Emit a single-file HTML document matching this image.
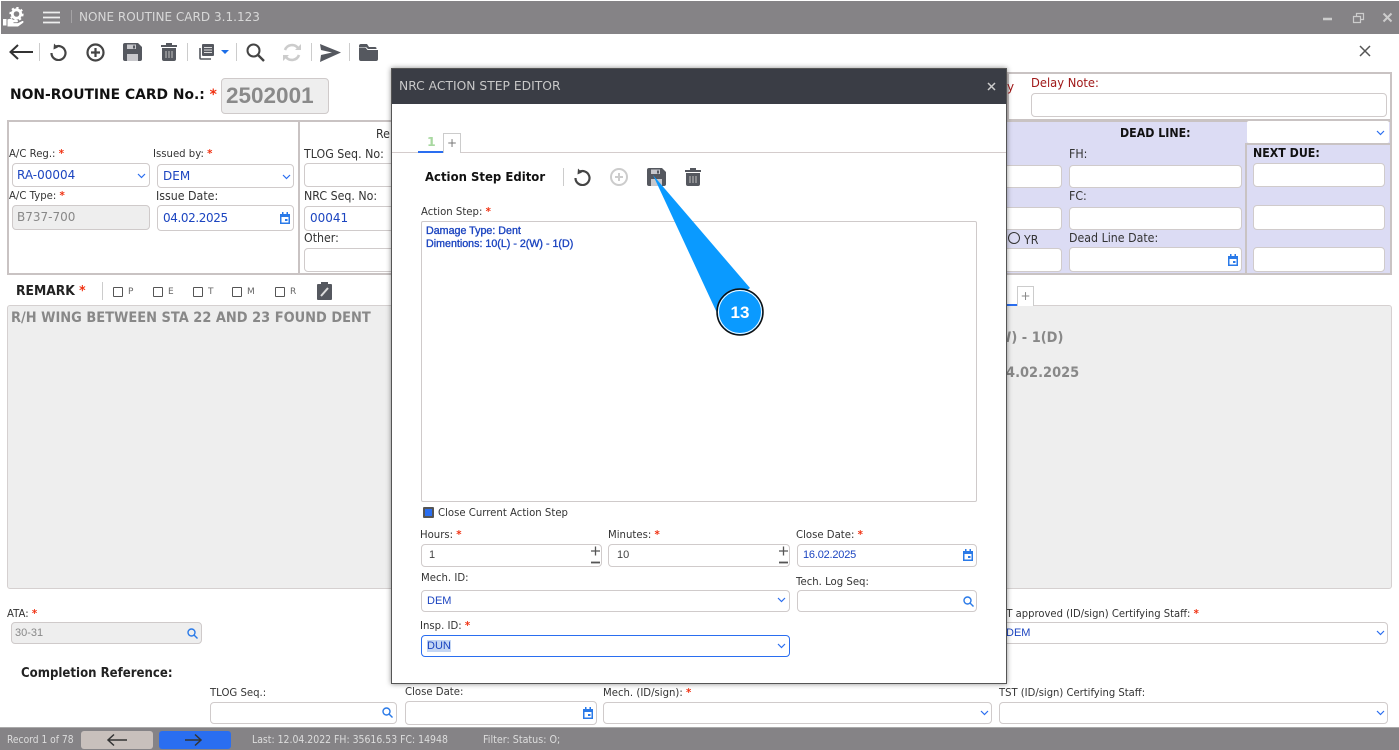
<!DOCTYPE html>
<html><head><meta charset="utf-8"><style>
html,body{margin:0;padding:0;background:#fff;width:1399px;height:750px;overflow:hidden}
body{position:relative;font-family:"DejaVu Sans","Liberation Sans",sans-serif;color:#333}
div,span.a,svg.a{position:absolute;box-sizing:border-box}
.l{font-size:11px;white-space:nowrap;color:#333;line-height:14px;transform-origin:left center;transform:scaleX(.92)}
.l b,b.r{color:#f03010;font-weight:bold}
.i{background:#fff;border:1px solid #d0cbcb;border-radius:4px;font-size:12px;color:#1c45c0;white-space:nowrap;padding-left:5px}
.g{background:#eee;color:#888;border-color:#cfcaca}
.s{font-family:"Liberation Sans",sans-serif}
.bd{background:#c9c3c3}
.chk{width:10px;height:10px;border:1.5px solid #555;border-radius:1px}
.ck{font-size:9px;color:#666}
.bar{background:#858386}
</style></head><body>

<!-- top bar -->
<div class="bar" style="left:1px;top:1px;width:1398px;height:33px"></div>
<svg class="a" style="left:2px;top:7px" width="24" height="20" viewBox="0 0 24 20"><circle cx="14.500" cy="7" r="4.200" fill="none" stroke="#fff" stroke-width="2.800"/><circle cx="14.500" cy="7" r="6.200" fill="none" stroke="#fff" stroke-width="1.800" stroke-dasharray="2.300 2.500"/><path fill="#fff" d="M1 12h3.500v6.500H1zM5.500 12.500c2.500-1.200 4.500-.6 6.500.5h3c1.500.3 1.300 2.300-.3 2.300h-3.200v.8h4.500l4-2c1.400-.5 2 .8 1 1.800l-5 3.600H5.500z"/></svg>
<svg class="a" style="left:43px;top:11px" width="17" height="13"><path d="M0 1.500h17M0 6.500h17M0 11.500h17" stroke="#eee" stroke-width="1.700"/></svg>
<div style="left:71px;top:10px;width:1px;height:13px;background:#a5a3a5"></div>
<div style="left:79px;top:8px;color:#d8d8d8;font-size:12.500px;line-height:18px;white-space:nowrap;transform-origin:left;transform:scaleX(.963)">NONE ROUTINE CARD 3.1.123</div>
<svg class="a" style="left:1322px;top:12px" width="72" height="14" fill="none" stroke="#ccc"><path d="M1 7h9" stroke-width="2.500"/><path d="M31.500 4.500h7v6h-7zM34.500 4.500V1.500h7v6h-3" stroke-width="1.200"/><path d="M61.500 1.500l8 8M69.500 1.500l-8 8" stroke-width="2"/></svg>

<!-- toolbar -->
<svg class="a" style="left:8px;top:43px" width="26" height="18" fill="none" stroke="#333" stroke-width="2"><path d="M25 9H3M10 2L2.500 9l7.500 7"/></svg>
<div style="left:39px;top:43px;width:1px;height:18px;background:#ccc"></div>
<svg class="a" style="left:49px;top:43px" width="18" height="18" fill="none" stroke="#444" stroke-width="2.200"><path d="M6 4a7 7 0 1 1-3.500 6"/><path d="M5 .5L9 4.500 4.500 6.500z" fill="#444" stroke="none"/></svg>
<svg class="a" style="left:86px;top:43px" width="19" height="19" fill="none" stroke="#444" stroke-width="2.200"><circle cx="9.500" cy="9.500" r="8"/><path d="M5 9.500h9M9.500 5v9"/></svg>
<svg class="a" style="left:123px;top:43px" width="19" height="18"><path fill="#55585f" d="M2 0h13l4 4v12a2 2 0 0 1-2 2H2a2 2 0 0 1-2-2V2a2 2 0 0 1 2-2z"/><path fill="#c8c8cc" d="M4 1.500h9v4.500H4zM4 11h11v7H4z"/><path fill="#55585f" d="M10 2.500h2v3h-2z"/></svg>
<svg class="a" style="left:161px;top:43px" width="16" height="18"><path fill="#55585f" d="M5 0h6v2h5v2H0V2h5zM1 5h14v11a2 2 0 0 1-2 2H3a2 2 0 0 1-2-2z"/><path stroke="#aaa" stroke-width="1.300" d="M5 8v7M8 8v7M11 8v7"/></svg>
<div style="left:187px;top:43px;width:1px;height:18px;background:#ccc"></div>
<svg class="a" style="left:199px;top:44px" width="18" height="16"><path fill="none" stroke="#55585f" stroke-width="1.600" d="M1 4v10a1 1 0 0 0 1 1h10"/><path fill="#55585f" d="M4 0h10a1 1 0 0 1 1 1v10a1 1 0 0 1-1 1H4a1 1 0 0 1-1-1V1a1 1 0 0 1 1-1z"/><path stroke="#ddd" d="M5 3.500h8M5 6h8M5 8.500h8"/></svg>
<svg class="a" style="left:221px;top:50px" width="8" height="5"><path fill="#1c6ee8" d="M0 0h8L4 4z"/></svg>
<div style="left:236px;top:43px;width:1px;height:18px;background:#ccc"></div>
<svg class="a" style="left:246px;top:43px" width="19" height="19" fill="none" stroke="#444" stroke-width="2"><circle cx="7.500" cy="7.500" r="6"/><path d="M12 12l6 6" stroke-width="2.400"/></svg>
<svg class="a" style="left:282px;top:43px" width="20" height="19" fill="none" stroke="#ccc" stroke-width="2.600"><path d="M3 7a7.500 7.500 0 0 1 13-2M17 12a7.500 7.500 0 0 1-13 2"/><path fill="#ccc" stroke="none" d="M13 7h6V1zM7 12H1v6z"/></svg>
<div style="left:311px;top:43px;width:1px;height:18px;background:#ccc"></div>
<svg class="a" style="left:320px;top:44px" width="21" height="18"><path fill="#55585f" d="M0 0l21 8.500L0 18l1-7 11-2.500L1 6z"/></svg>
<div style="left:349px;top:43px;width:1px;height:18px;background:#ccc"></div>
<svg class="a" style="left:359px;top:44px" width="19" height="17"><path fill="#55585f" d="M2 0h6l2 3h6a1.500 1.500 0 0 1 1.500 1.500V5H9L7 3H0V2a2 2 0 0 1 2-2zM0 3.500h6.500l2 2.500H19v9a2 2 0 0 1-2 2H2a2 2 0 0 1-2-2z"/></svg>
<svg class="a" style="left:1359px;top:45px" width="12" height="12" stroke="#555" stroke-width="1.500"><path d="M1 1l10 10M11 1L1 11"/></svg>

<!-- heading -->
<div style="left:10px;top:86px;font-size:14px;font-weight:bold;color:#111;line-height:18px;white-space:nowrap;transform-origin:left;transform:scaleX(.99)">NON-ROUTINE CARD No.: <b class="r">*</b></div>
<div class="i g s" style="left:221px;top:78px;width:108px;height:36px;font-size:22.500px;font-weight:bold;line-height:33px;padding-left:4px;color:#8a8a8a">2502001</div>

<!-- left panel -->
<div style="left:7px;top:120px;width:400px;height:155px;border:2px solid #c9c3c3"></div>
<div style="left:298px;top:120px;width:2px;height:155px;background:#c9c3c3"></div>
<div class="l" style="left:9px;top:147px">A/C Reg.: <b>*</b></div>
<div class="l" style="left:153px;top:147px">Issued by: <b>*</b></div>
<div class="i" style="left:12px;top:163px;width:138px;height:24px;line-height:22px;padding-left:4px">RA-00004</div>
<svg class="a" style="left:137px;top:173px" width="9" height="6" fill="none" stroke="#2a6ef0" stroke-width="1.200"><path d="M1 1l3.500 3.500L8 1"/></svg>
<div class="i" style="left:157px;top:164px;width:137px;height:24px;line-height:22px">DEM</div>
<svg class="a" style="left:282px;top:174px" width="9" height="6" fill="none" stroke="#2a6ef0" stroke-width="1.200"><path d="M1 1l3.500 3.500L8 1"/></svg>
<div class="l" style="left:9px;top:189px">A/C Type: <b>*</b></div>
<div class="l" style="left:156px;top:189px;font-size:12px">Issue Date:</div>
<div class="i g" style="left:12px;top:205px;width:138px;height:25px;line-height:23px;padding-left:4px">B737-700</div>
<div class="i" style="left:157px;top:205px;width:137px;height:26px;line-height:24px;letter-spacing:-.4px">04.02.2025</div>
<svg class="a" style="left:280px;top:212px" width="10" height="12"><path fill="#2a7ae8" d="M0 2h10v10H0z"/><path fill="#fff" d="M1.500 5h7v5.500h-7z"/><path fill="#2a7ae8" d="M5 7h2.500v2H5zM2 0h1.500v3H2zM6.500 0H8v3H6.500z"/></svg>
<div class="l" style="left:304px;top:147px;font-size:12px">TLOG Seq. No:</div>
<div class="l" style="left:376px;top:127px;font-size:12px">Re</div>
<div class="i" style="left:304px;top:163px;width:100px;height:24px"></div>
<div class="l" style="left:304px;top:189px;font-size:12px">NRC Seq. No:</div>
<div class="i" style="left:304px;top:206px;width:100px;height:25px;line-height:23px">00041</div>
<div class="l" style="left:304px;top:231px;font-size:12px">Other:</div>
<div class="i" style="left:304px;top:248px;width:100px;height:24px"></div>

<!-- remark row -->
<div style="left:16px;top:283px;font-size:13px;font-weight:bold;color:#222;line-height:18px;white-space:nowrap;transform-origin:left;transform:scaleX(.95)">REMARK <b class="r">*</b></div>
<div style="left:102px;top:282px;width:1px;height:18px;background:#ccc"></div>
<div class="chk" style="left:113px;top:287px"></div><div class="ck" style="left:128px;top:287px">P</div>
<div class="chk" style="left:153px;top:287px"></div><div class="ck" style="left:168px;top:287px">E</div>
<div class="chk" style="left:193px;top:287px"></div><div class="ck" style="left:208px;top:287px">T</div>
<div class="chk" style="left:232px;top:287px"></div><div class="ck" style="left:247px;top:287px">M</div>
<div class="chk" style="left:275px;top:287px"></div><div class="ck" style="left:290px;top:287px">R</div>
<svg class="a" style="left:317px;top:282px" width="15" height="18"><path fill="#55585f" d="M1 2h3V0h7v2h3a1 1 0 0 1 1 1v14a1 1 0 0 1-1 1H1a1 1 0 0 1-1-1V3a1 1 0 0 1 1-1z"/><path stroke="#ddd" stroke-width="2" d="M4 14l7-8"/></svg>

<!-- big gray -->
<div style="left:7px;top:305px;width:1385px;height:284px;background:#eee;border:1px solid #d5d0d0;border-radius:3px"></div>
<div style="left:11px;top:309px;font-size:14px;font-weight:bold;color:#888;line-height:18px;white-space:nowrap;transform-origin:left;transform:scaleX(.928)">R/H WING BETWEEN STA 22 AND 23 FOUND DENT</div>
<div style="left:997px;top:329px;font-size:14px;font-weight:bold;color:#888;line-height:18px;white-space:nowrap;transform-origin:left;transform:scaleX(.928)">W) - 1(D)</div>
<div style="left:997px;top:364px;font-size:14px;font-weight:bold;color:#888;line-height:18px;white-space:nowrap;transform-origin:left;transform:scaleX(.928)">04.02.2025</div>
<div style="left:1007px;top:304px;width:10px;height:2px;background:#2a6ef0"></div>
<div style="left:1017px;top:286px;width:17px;height:20px;border:1px solid #ccc;border-bottom:0;background:#fff;color:#888;font-size:12px;text-align:center;line-height:19px">+</div>

<!-- right panels -->
<div style="left:1007px;top:72px;width:385px;height:49px;border:2px solid #c9c3c3"></div>
<div class="l" style="left:1031px;top:76px;font-size:12px;color:#a01818;transform:scaleX(.96)">Delay Note:</div>
<div style="left:1007px;top:80px;font-size:12px;color:#a01818;line-height:14px">y</div>
<div class="i" style="left:1031px;top:93px;width:356px;height:24px"></div>
<div style="left:1007px;top:120px;width:385px;height:155px;background:#dcdcf4;border:2px solid #c9c3c3;border-left:0"></div>
<div class="bd" style="left:1245px;top:144px;width:2px;height:130px"></div>
<div class="bd" style="left:1245px;top:143px;width:146px;height:2px"></div>
<div style="left:1247px;top:121px;width:142px;height:22px;background:#fff;border-radius:2px"></div>
<svg class="a" style="left:1376px;top:130px" width="9" height="6" fill="none" stroke="#2a6ef0" stroke-width="1.200"><path d="M1 1l3.500 3.500L8 1"/></svg>
<div style="left:1120px;top:126px;font-size:12px;font-weight:bold;color:#111;line-height:15px;white-space:nowrap;transform-origin:left;transform:scaleX(.92)">DEAD LINE:</div>
<div style="left:1253px;top:146px;font-size:12px;font-weight:bold;color:#111;line-height:15px;white-space:nowrap;transform-origin:left;transform:scaleX(.92)">NEXT DUE:</div>
<div class="l" style="left:1069px;top:147px;font-size:12px">FH:</div>
<div class="l" style="left:1069px;top:189px;font-size:12px">FC:</div>
<div class="l" style="left:1069px;top:231px;font-size:12px">Dead Line Date:</div>
<div class="i" style="left:1000px;top:165px;width:62px;height:23px"></div>
<div class="i" style="left:1000px;top:207px;width:62px;height:23px"></div>
<div class="i" style="left:1000px;top:248px;width:62px;height:24px"></div>
<div class="i" style="left:1069px;top:165px;width:173px;height:23px"></div>
<div class="i" style="left:1069px;top:207px;width:173px;height:23px"></div>
<div class="i" style="left:1069px;top:247px;width:173px;height:25px"></div>
<svg class="a" style="left:1228px;top:254px" width="10" height="12"><path fill="#2a7ae8" d="M0 2h10v10H0z"/><path fill="#fff" d="M1.500 5h7v5.500h-7z"/><path fill="#2a7ae8" d="M5 7h2.500v2H5zM2 0h1.500v3H2zM6.500 0H8v3H6.500z"/></svg>
<div class="i" style="left:1253px;top:163px;width:132px;height:24px"></div>
<div class="i" style="left:1253px;top:205px;width:132px;height:25px"></div>
<div class="i" style="left:1253px;top:247px;width:132px;height:25px"></div>
<div style="left:1008px;top:232px;width:12px;height:12px;border:1.200px solid #333;border-radius:50%"></div>
<div class="l" style="left:1024px;top:233px;font-size:12px">YR</div>

<!-- bottom fields -->
<div class="l" style="left:7px;top:607px">ATA: <b>*</b></div>
<div class="i g s" style="left:11px;top:622px;width:191px;height:22px;font-size:11px;line-height:20px;padding-left:3px">30-31</div>
<svg class="a" style="left:187px;top:628px" width="11" height="11" fill="none" stroke="#2a7ae8" stroke-width="1.400"><circle cx="4.500" cy="4.500" r="3.500"/><path d="M7 7l3.500 3.500"/></svg>
<div style="left:21px;top:665px;font-size:13px;font-weight:bold;color:#222;line-height:18px;white-space:nowrap;transform-origin:left;transform:scaleX(.905)">Completion Reference:</div>
<div class="l" style="left:210px;top:686px">TLOG Seq.:</div>
<div class="i" style="left:210px;top:702px;width:187px;height:22px"></div>
<svg class="a" style="left:382px;top:707px" width="11" height="11" fill="none" stroke="#2a7ae8" stroke-width="1.400"><circle cx="4.500" cy="4.500" r="3.500"/><path d="M7 7l3.500 3.500"/></svg>
<div class="l" style="left:405px;top:685px">Close Date:</div>
<div class="i" style="left:405px;top:701px;width:192px;height:24px"></div>
<svg class="a" style="left:583px;top:707px" width="10" height="12"><path fill="#2a7ae8" d="M0 2h10v10H0z"/><path fill="#fff" d="M1.500 5h7v5.500h-7z"/><path fill="#2a7ae8" d="M5 7h2.500v2H5zM2 0h1.500v3H2zM6.500 0H8v3H6.500z"/></svg>
<div class="l" style="left:603px;top:686px">Mech. (ID/sign): <b>*</b></div>
<div class="i" style="left:603px;top:702px;width:389px;height:22px"></div>
<svg class="a" style="left:980px;top:710px" width="9" height="6" fill="none" stroke="#2a6ef0" stroke-width="1.200"><path d="M1 1l3.500 3.500L8 1"/></svg>
<div class="l" style="left:999px;top:686px;transform:scaleX(.91)">TST (ID/sign) Certifying Staff:</div>
<div class="i" style="left:999px;top:702px;width:389px;height:22px"></div>
<svg class="a" style="left:1376px;top:710px" width="9" height="6" fill="none" stroke="#2a6ef0" stroke-width="1.200"><path d="M1 1l3.500 3.500L8 1"/></svg>
<div class="l" style="left:1000px;top:607px;transform:scaleX(.91)">ST approved (ID/sign) Certifying Staff: <b>*</b></div>
<div class="i s" style="left:1000px;top:622px;width:388px;height:22px;font-size:11px;line-height:20px;padding-left:5px">DEM</div>
<svg class="a" style="left:1376px;top:630px" width="9" height="6" fill="none" stroke="#2a6ef0" stroke-width="1.200"><path d="M1 1l3.500 3.500L8 1"/></svg>

<!-- status bar -->
<div class="bar" style="left:0;top:727px;width:1399px;height:23px;border-top:1px solid #aaa"></div>
<div style="left:7px;top:733px;font-size:10.500px;color:#ddd;line-height:14px;white-space:nowrap;transform-origin:left;transform:scaleX(.87)">Record 1 of 78</div>
<div style="left:81px;top:731px;width:72px;height:18px;background:#c8c0bc;border-radius:3px"></div>
<svg class="a" style="left:106px;top:733px" width="22" height="14" fill="none" stroke="#333" stroke-width="1.500"><path d="M21 7H2M8 1.500L2 7l6 5.500"/></svg>
<div style="left:159px;top:731px;width:72px;height:18px;background:#2a6ef0;border-radius:3px"></div>
<svg class="a" style="left:185px;top:733px" width="18" height="14" fill="none" stroke="#333" stroke-width="1.500"><path d="M0 7h16M10 1.500L16 7l-6 5.500"/></svg>
<div style="left:252px;top:733px;font-size:10.500px;color:#ddd;line-height:14px;white-space:nowrap;transform-origin:left;transform:scaleX(.89)">Last: 12.04.2022 FH: 35616.53 FC: 14948</div>
<div style="left:483px;top:733px;font-size:10.500px;color:#ddd;line-height:14px;white-space:nowrap;transform-origin:left;transform:scaleX(.91)">Filter: Status: O;</div>

<!-- modal -->
<div style="left:391px;top:68px;width:616px;height:616px;background:#fff;border:1px solid #555;box-shadow:0 0 5px rgba(0,0,0,.45)"></div>
<div style="left:392px;top:69px;width:614px;height:35px;background:#3a3d45"></div>
<div style="left:399px;top:77px;font-size:12.500px;color:#c8c8c8;line-height:18px;white-space:nowrap;transform-origin:left;transform:scaleX(.985)">NRC ACTION STEP EDITOR</div>
<svg class="a" style="left:987px;top:82px" width="9" height="9" stroke="#ccc" stroke-width="1.500"><path d="M1 1l7 7M8 1L1 8"/></svg>
<div style="left:392px;top:152px;width:614px;height:1px;background:#d4cccc"></div>
<div style="left:427px;top:134px;font-size:12.500px;font-weight:bold;color:#a8d8a0;line-height:15px">1</div>
<div style="left:418px;top:151px;width:25px;height:2px;background:#2a6ef0"></div>
<div style="left:443px;top:133px;width:18px;height:20px;border:1px solid #ccc;border-bottom:0;background:#fff;color:#777;font-size:12px;text-align:center;line-height:19px">+</div>
<div style="left:425px;top:168px;font-size:12.500px;font-weight:bold;color:#111;line-height:17px;white-space:nowrap;transform-origin:left;transform:scaleX(.935)">Action Step Editor</div>
<div style="left:563px;top:168px;width:1px;height:18px;background:#ccc"></div>
<svg class="a" style="left:573px;top:168px" width="18" height="18" fill="none" stroke="#444" stroke-width="2.200"><path d="M6 4a7 7 0 1 1-3.500 6"/><path d="M5 .5L9 4.500 4.500 6.500z" fill="#444" stroke="none"/></svg>
<svg class="a" style="left:610px;top:168px" width="18" height="18" fill="none" stroke="#ccc" stroke-width="2"><circle cx="9" cy="9" r="8"/><path d="M5 9h8M9 5v8"/></svg>
<svg class="a" style="left:647px;top:168px" width="19" height="18"><path fill="#55585f" d="M2 0h13l4 4v12a2 2 0 0 1-2 2H2a2 2 0 0 1-2-2V2a2 2 0 0 1 2-2z"/><path fill="#c8c8cc" d="M4 1.500h9v4.500H4zM4 11h11v7H4z"/><path fill="#55585f" d="M10 2.500h2v3h-2z"/></svg>
<svg class="a" style="left:685px;top:168px" width="16" height="18"><path fill="#55585f" d="M5 0h6v2h5v2H0V2h5zM1 5h14v11a2 2 0 0 1-2 2H3a2 2 0 0 1-2-2z"/><path stroke="#aaa" stroke-width="1.300" d="M5 8v7M8 8v7M11 8v7"/></svg>
<div class="l" style="left:421px;top:205px">Action Step: <b>*</b></div>
<div style="left:421px;top:221px;width:556px;height:281px;border:1px solid #cfcaca;border-radius:2px;background:#fff"></div>
<div class="s" style="left:426px;top:225px;font-size:10.700px;color:#1c45c0;line-height:12.500px;white-space:nowrap;-webkit-text-stroke:.35px #1c45c0">Damage Type: Dent<br>Dimentions: 10(L) - 2(W) - 1(D)</div>
<div style="left:423px;top:507px;width:11px;height:11px;background:#2a6ef0;border:2px solid #555;border-radius:1px"></div>
<div class="l" style="left:438px;top:506px">Close Current Action Step</div>
<div class="l" style="left:420px;top:528px">Hours: <b>*</b></div>
<div class="l" style="left:608px;top:528px">Minutes: <b>*</b></div>
<div class="l" style="left:796px;top:528px">Close Date: <b>*</b></div>
<div class="i s" style="left:421px;top:544px;width:181px;height:23px;font-size:11px;line-height:20px;padding-left:7px;color:#444">1</div>
<div class="i s" style="left:608px;top:544px;width:182px;height:23px;font-size:11px;line-height:20px;padding-left:8px;color:#444">10</div>
<div class="i s" style="left:797px;top:544px;width:180px;height:23px;font-size:11px;line-height:20px;padding-left:5px;letter-spacing:-.2px">16.02.2025</div>
<svg class="a" style="left:590px;top:544px" width="11" height="22" stroke="#555" stroke-width="1.300"><path d="M1 7h9M5.500 2.500v9"/><path d="M1 18.500h9" stroke-width="1.800"/></svg>
<svg class="a" style="left:778px;top:544px" width="11" height="22" stroke="#555" stroke-width="1.300"><path d="M1 7h9M5.500 2.500v9"/><path d="M1 18.500h9" stroke-width="1.800"/></svg>
<svg class="a" style="left:963px;top:549px" width="10" height="12"><path fill="#2a7ae8" d="M0 2h10v10H0z"/><path fill="#fff" d="M1.500 5h7v5.500h-7z"/><path fill="#2a7ae8" d="M5 7h2.500v2H5zM2 0h1.500v3H2zM6.500 0H8v3H6.500z"/></svg>
<div class="l" style="left:421px;top:571px">Mech. ID:</div>
<div class="l" style="left:796px;top:575px">Tech. Log Seq:</div>
<div class="i s" style="left:421px;top:590px;width:369px;height:22px;font-size:11px;line-height:20px;padding-left:5px">DEM</div>
<svg class="a" style="left:777px;top:597px" width="9" height="6" fill="none" stroke="#2a6ef0" stroke-width="1.200"><path d="M1 1l3.500 3.500L8 1"/></svg>
<div class="i" style="left:797px;top:590px;width:180px;height:22px"></div>
<svg class="a" style="left:963px;top:596px" width="11" height="11" fill="none" stroke="#2a7ae8" stroke-width="1.400"><circle cx="4.500" cy="4.500" r="3.500"/><path d="M7 7l3.500 3.500"/></svg>
<div class="l" style="left:420px;top:619px">Insp. ID: <b>*</b></div>
<div class="i s" style="left:421px;top:635px;width:369px;height:22px;font-size:11px;line-height:20px;padding-left:5px;border-color:#2a6ef0"><span style="background:#c4d6f4">DUN</span></div>
<svg class="a" style="left:777px;top:643px" width="9" height="6" fill="none" stroke="#2a6ef0" stroke-width="1.200"><path d="M1 1l3.500 3.500L8 1"/></svg>

<!-- balloon -->
<svg class="a" style="left:640px;top:165px" width="130" height="175"><path fill="#0a9aff" d="M13 10L110 123 77 148z"/><circle cx="100" cy="147" r="23" fill="#0a9aff" stroke="#111" stroke-width="1.500"/><circle cx="100" cy="147" r="21.500" fill="none" stroke="#fff" stroke-width="1"/><text x="100" y="153" text-anchor="middle" fill="#fff" font-family="Liberation Sans,sans-serif" font-weight="bold" font-size="17">13</text></svg>
</body></html>
